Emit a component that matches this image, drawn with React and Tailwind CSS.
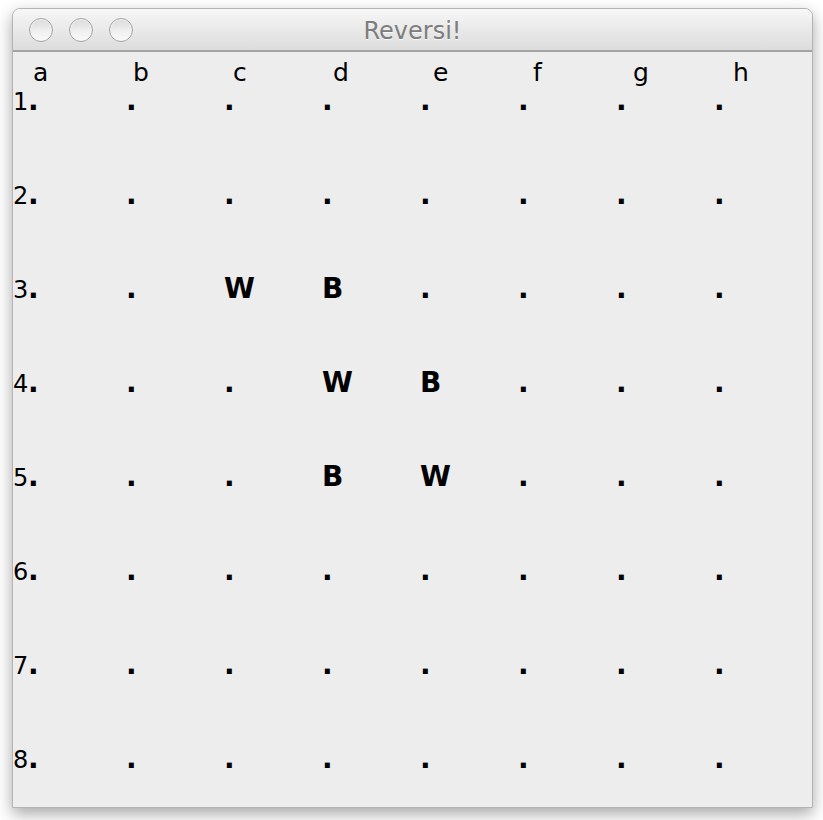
import React from "react"

const cols = ["a", "b", "c", "d", "e", "f", "g", "h"]

const board = [
    "........",
    "........",
    "..WB....",
    "...WB...",
    "...BW...",
    "........",
    "........",
    "........",
]

function Light() {
    return (
        <div className="w-[24px] h-[24px] rounded-full border border-[#a3a3a3] bg-gradient-to-b from-[#d9d9d9] via-[#eeeeee] to-[#fbfbfb] shadow-[inset_0_1px_1px_rgba(255,255,255,0.9)]" />
    )
}

export default function App() {
    return (
        <div className="min-h-screen bg-white pl-[12px] pt-[8px]" style={{ fontFamily: "'DejaVu Sans', sans-serif" }}>
            <div className="w-[801px] h-[800px] flex flex-col rounded-t-[8px] border border-[#b4b4b4] bg-[#ededed] shadow-[0_6px_16px_rgba(0,0,0,0.35)] overflow-hidden">
                <div className="relative h-[43px] shrink-0 bg-gradient-to-b from-[#f7f7f7] to-[#dcdcdc] border-b-2 border-[#a4a4a4]">
                    <div className="absolute left-[16px] top-[9px] flex gap-[16px]">
                        <Light />
                        <Light />
                        <Light />
                    </div>
                    <div className="text-center text-[24px] leading-[45px] text-[#7d7d7d] [text-shadow:0_1px_0_rgba(255,255,255,0.7)]">Reversi!</div>
                </div>
                <div className="flex-1 overflow-hidden pt-[6px] text-black">
                    <div className="flex h-[28px] pl-[20px] text-[25px] leading-[30px]">
                        {cols.map(c => (
                            <div key={c} className="w-[100px] shrink-0">{c}</div>
                        ))}
                    </div>
                    {board.map((row, r) => (
                        <div key={r} className="flex items-baseline h-[94px]">
                            <span className="w-[15px] shrink-0 text-[24px] leading-[30px] tracking-tight">{r + 1}</span>
                            {row.split("").map((cell, i) => (
                                <span key={i} className="w-[98px] shrink-0 text-[28px] leading-[30px] font-bold">{cell}</span>
                            ))}
                        </div>
                    ))}
                </div>
            </div>
        </div>
    )
}
